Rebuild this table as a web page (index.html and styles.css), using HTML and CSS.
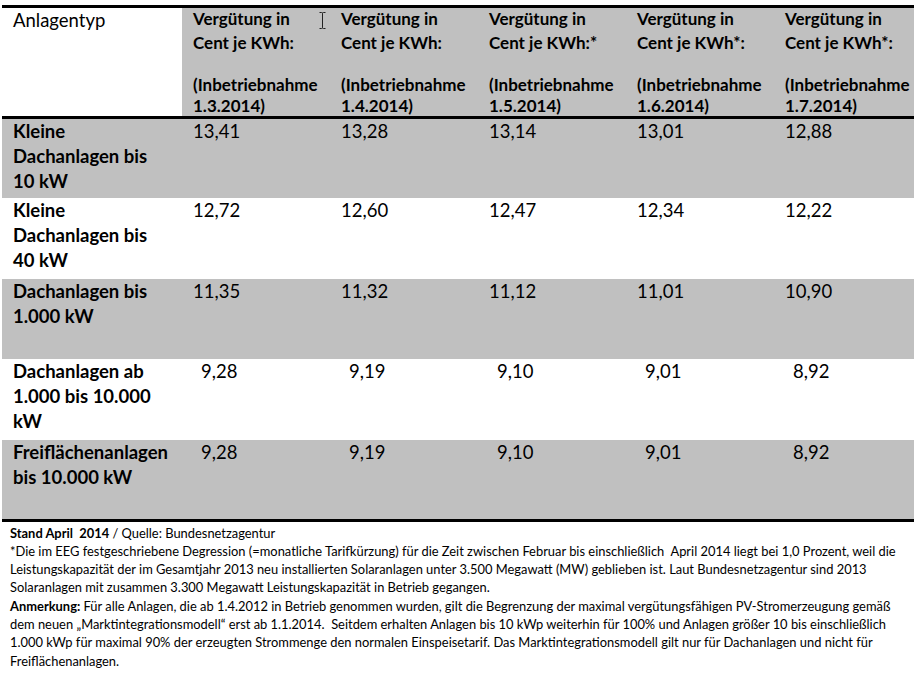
FILE: index.html
```html
<!DOCTYPE html>
<html lang="de">
<head>
<meta charset="utf-8">
<title>Vergütung Solaranlagen</title>
<link rel="stylesheet" href="styles.css">
</head>
<body>
<div class="page">
  <table class="tariffs">
    <colgroup>
      <col class="c-type">
      <col class="c-val"><col class="c-val"><col class="c-val"><col class="c-val"><col class="c-val">
    </colgroup>
    <thead>
      <tr>
        <th class="type-head">Anlagentyp</th>
        <th class="val-head"><div class="h1">Vergütung in<br>Cent je KWh:</div><div class="hgap"></div><div class="h2">(Inbetriebnahme<br>1.3.2014)</div></th>
        <th class="val-head"><div class="h1">Vergütung in<br>Cent je KWh:</div><div class="hgap"></div><div class="h2">(Inbetriebnahme<br>1.4.2014)</div></th>
        <th class="val-head"><div class="h1">Vergütung in<br>Cent je KWh:*</div><div class="hgap"></div><div class="h2">(Inbetriebnahme<br>1.5.2014)</div></th>
        <th class="val-head"><div class="h1">Vergütung in<br>Cent je KWh*:</div><div class="hgap"></div><div class="h2">(Inbetriebnahme<br>1.6.2014)</div></th>
        <th class="val-head"><div class="h1">Vergütung in<br>Cent je KWh*:</div><div class="hgap"></div><div class="h2">(Inbetriebnahme<br>1.7.2014)</div></th>
      </tr>
    </thead>
    <tbody>
      <tr class="grey">
        <td class="type">Kleine<br>Dachanlagen bis<br>10 kW</td>
        <td>13,41</td><td>13,28</td><td>13,14</td><td>13,01</td><td>12,88</td>
      </tr>
      <tr>
        <td class="type">Kleine<br>Dachanlagen bis<br>40 kW</td>
        <td>12,72</td><td>12,60</td><td>12,47</td><td>12,34</td><td>12,22</td>
      </tr>
      <tr class="grey">
        <td class="type">Dachanlagen bis<br>1.000 kW</td>
        <td>11,35</td><td>11,32</td><td>11,12</td><td>11,01</td><td>10,90</td>
      </tr>
      <tr>
        <td class="type">Dachanlagen ab<br>1.000 bis 10.000<br>kW</td>
        <td class="short">9,28</td><td class="short">9,19</td><td class="short">9,10</td><td class="short">9,01</td><td class="short">8,92</td>
      </tr>
      <tr class="grey last">
        <td class="type">Freiflächenanlagen<br>bis 10.000 kW</td>
        <td class="short">9,28</td><td class="short">9,19</td><td class="short">9,10</td><td class="short">9,01</td><td class="short">8,92</td>
      </tr>
    </tbody>
  </table>
  <div class="notes">
    <p><b>Stand April&nbsp; 2014</b> / Quelle: Bundesnetzagentur</p>
    <p>*Die im EEG festgeschriebene Degression (=monatliche Tarifkürzung) für die Zeit zwischen Februar bis einschließlich&nbsp; April 2014 liegt bei 1,0 Prozent, weil die<br>Leistungskapazität der im Gesamtjahr 2013 neu installierten Solaranlagen unter 3.500 Megawatt (MW) geblieben ist. Laut Bundesnetzagentur sind 2013<br>Solaranlagen mit zusammen 3.300 Megawatt Leistungskapazität in Betrieb gegangen.</p>
    <p><b>Anmerkung:</b> Für alle Anlagen, die ab 1.4.2012 in Betrieb genommen wurden, gilt die Begrenzung der maximal vergütungsfähigen PV-Stromerzeugung gemäß<br>dem neuen „Marktintegrationsmodell“ erst ab 1.1.2014.&nbsp; Seitdem erhalten Anlagen bis 10 kWp weiterhin für 100% und Anlagen größer 10 bis einschließlich<br>1.000 kWp für maximal 90% der erzeugten Strommenge den normalen Einspeisetarif. Das Marktintegrationsmodell gilt nur für Dachanlagen und nicht für<br>Freiflächenanlagen.</p>
  </div>
  <svg class="cursor" width="7" height="17" viewBox="0 0 7 17" aria-hidden="true">
    <path d="M0.5 0.5 H2.5 Q3.5 0.5 3.5 1.5 V15.5 Q3.5 16.5 2.5 16.5 H0.5 M6.5 0.5 H4.5 Q3.5 0.5 3.5 1.5 M3.5 15.5 Q3.5 16.5 4.5 16.5 H6.5" fill="none" stroke="#222" stroke-width="1"/>
  </svg>
</div>
</body>
</html>
```
FILE: styles.css
```css
html, body {
  margin: 0;
  padding: 0;
  background: #ffffff;
}
body {
  font-family: Lato, "Open Sans", sans-serif;
  color: #000;
  overflow: hidden;
  width: 914px;
  height: 689px;
}
.page {
  position: relative;
  padding-top: 5px;
  padding-left: 2px;
}
.tariffs {
  border-collapse: collapse;
  table-layout: fixed;
  width: 920px;
  border-top: 3px solid #000;
}
.c-type { width: 180px; }
.c-val { width: 148px; }

.tariffs th,
.tariffs td {
  padding: 0 0 0 11px;
  vertical-align: top;
  text-align: left;
  white-space: nowrap;
}
thead tr {
  height: 110px;
  border-bottom: 3px solid #000;
}
.type-head {
  font-weight: 400;
  font-size: 18.5px;
  line-height: 24px;
  padding-top: 0;
  background: #fff;
}
.val-head {
  background: #c0c0c0;
  font-weight: 700;
  font-size: 17px;
}
.h1 {
  line-height: 24px;
  margin-top: -1px;
}
.hgap { height: 19px; }
.h2 { line-height: 21px; }

tbody tr { height: 80.5px; }
tbody tr.grey { background: #c0c0c0; }
tbody tr.last { border-bottom: 3px solid #000; }
tbody td {
  font-size: 18.5px;
  line-height: 25px;
  padding-top: 1px;
}
td.type { font-weight: 700; }
td.short { padding-left: 19px; }

.notes {
  padding: 2px 0 0 8px;
  font-size: 12.9px;
  line-height: 18.3px;
  white-space: nowrap;
}
.notes p { margin: 0; }

.cursor {
  position: absolute;
  left: 319px;
  top: 12px;
}
```
